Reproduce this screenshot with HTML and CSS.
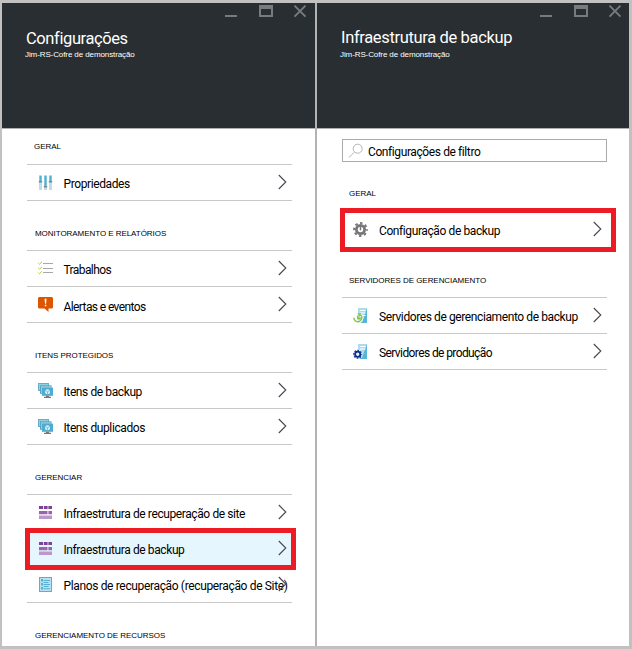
FILE: index.html
```html
<!DOCTYPE html>
<html lang="pt-BR">
<head>
<meta charset="utf-8">
<title>Configurações</title>
<link rel="stylesheet" href="styles.css">
</head>
<body>
<svg width="0" height="0" class="defs">
  <defs>
    <symbol id="chevron" viewBox="0 0 9 16"><path d="M.8 1l7 7-7 7" fill="none" stroke="#45474f" stroke-width="1.1"/></symbol>
    <symbol id="controls" viewBox="0 0 82 13">
      <path d="M0 11h12" stroke="#777b7e" stroke-width="2"/>
      <path fill="#777b7e" fill-rule="evenodd" d="M34 0h14v12H34zM36 4v6h10V4z"/>
      <path d="M69.5.7l11 11M80.5.7l-11 11" stroke="#777b7e" stroke-width="1.9"/>
    </symbol>
    <symbol id="sliders" viewBox="0 0 15 15">
      <path fill="#b9dfec" d="M1 0h3v15H1zM6 0h3v15H6zM11 0h3v15h-3z"/>
      <path fill="#4fb0d0" d="M1.5 1h2v5h-2zM6.500 1h2v10h-2zM11.500 1h2v5h-2z"/>
      <path fill="#858585" d="M.8 6h3.400v1.500H.8zM5.800 11h3.400v1.500H5.800zM10.800 6h3.400v1.500h-3.400z"/>
    </symbol>
    <symbol id="tasks" viewBox="0 0 15 15">
      <path stroke="#a4a8aa" stroke-width="1" d="M5 2.500h10M5 7.500h10M5 11.500h10"/>
      <path fill="none" stroke="#a6cf3a" stroke-width="1" d="M.3 2l1.200 1.200L4 .8M.3 7l1.200 1.200L4 5.800M.3 11.500l1.200 1.200L4 10.300"/>
    </symbol>
    <symbol id="alert" viewBox="0 0 15 15">
      <path fill="#dc5500" d="M1 0h13l1 1v9.500l-1 1h-3.500V15l-4-3.500H1l-1-1V1z"/>
      <path fill="#fff" d="M6.600 1.800h1.900l-.4 5h-1.100zM6.800 7.800h1.500v1.500H6.800z"/>
    </symbol>
    <symbol id="monitors" viewBox="0 0 15 15">
      <path fill="#6bacc9" d="M0 0h11v8H0z"/>
      <path fill="#92cfe3" d="M1 1h9v6H1z"/>
      <path fill="#5ba4c4" d="M2 2.300h11.500v8.500H2z"/>
      <path fill="#8bcce3" d="M3 3.200h10v7H3z"/>
      <path fill="#4fabcf" d="M4 4.600h11v8.200H4z"/>
      <path fill="#777" d="M8 12.800h3v1h2v1.200H6v-1.200h2z"/>
      <circle cx="9.500" cy="8.700" r="2.500" fill="#d9f1fa"/>
      <path fill="none" stroke="#4fabcf" stroke-width=".7" d="M7.400 7.600l2.100 1.200 2.100-1.200M9.500 8.800v2.300"/>
    </symbol>
    <symbol id="blocks" viewBox="0 0 15 15">
      <path fill="#7d4199" d="M1 1h4v3H1zM5.800 1h3.800v3H5.800zM10.400 1H14v3h-3.600z"/>
      <path fill="#9864ad" d="M1 6h8.500v3.200H1zM10.400 6H14v3.200h-3.600z"/>
      <path fill="#bd96cc" d="M1 10.500h13v3.500H1z"/>
    </symbol>
    <symbol id="plan" viewBox="0 0 15 15">
      <path fill="#58b0d4" d="M1 0h13v15H1z"/>
      <path fill="#b8e1f1" d="M2 1h11v13H2z"/>
      <path fill="#58b0d4" d="M3 2h2v2.500H3zM3 6h2v2.500H3zM3 10h2v2.500H3zM5.500 3H12v1H5.500zM5.500 5h5v1h-5zM5.500 7H12v1H5.500zM5.500 9h5v1h-5zM5.500 11.300H12v1H5.500z"/>
    </symbol>
    <symbol id="gear" viewBox="0 0 15 15">
      <circle cx="7.500" cy="7.500" r="6.400" fill="none" stroke="#777" stroke-width="2" stroke-dasharray="2.500 2.527" stroke-dashoffset="1.250"/>
      <circle cx="7.500" cy="7.500" r="4.100" fill="none" stroke="#777" stroke-width="2.800"/>
      <path stroke="#777" stroke-width="1.500" d="M7.500 3.500v4.800"/>
    </symbol>
    <symbol id="server-backup" viewBox="0 0 15 15">
      <path fill="#58b4d8" d="M5 0h9v15H5z"/>
      <path fill="#aadcee" d="M5 0h9L9 14H5z"/>
      <path fill="#fff" d="M7 2h5.500v1H7zM7 4.500h5.500v1H7zM7 7h5.500v1H7z"/>
      <path fill="none" stroke="#fff" stroke-width="2.600" d="M1.200 8.800a4 4 0 1 0 6-2.200"/>
      <path fill="none" stroke="#8cc63f" stroke-width="1.500" d="M.8 9.800a4 4 0 1 0 6.500-3.200M4.700 7.500v3h3"/>
      <path fill="#8cc63f" d="M4.300 5.500l4-.5-1.500 3.600z"/>
    </symbol>
    <symbol id="server-gear" viewBox="0 0 15 15">
      <path fill="#58b4d8" d="M5 0h9v15H5z"/>
      <path fill="#aadcee" d="M5 0h9L9 14H5z"/>
      <path fill="#fff" d="M7 2h5.500v1H7zM7 4.500h5.500v1H7z"/>
      <circle cx="4.700" cy="10.300" r="4.800" fill="#e5f4fa"/>
      <circle cx="4.700" cy="10.300" r="3.900" fill="none" stroke="#102a8e" stroke-width="1.300" stroke-dasharray="1.531 1.531" stroke-dashoffset=".765"/>
      <circle cx="4.700" cy="10.300" r="2.600" fill="none" stroke="#102a8e" stroke-width="1.800"/>
    </symbol>
  </defs>
</svg>

<main class="portal">
  <section class="blade blade-settings">
    <header class="blade-header">
      <svg class="controls"><use href="#controls"/></svg>
      <h1>Configurações</h1>
      <p>Jim-RS-Cofre de demonstração</p>
    </header>
    <div class="blade-body">
      <h2 class="first">GERAL</h2>
      <ul>
        <li><svg class="icon"><use href="#sliders"/></svg><span>Propriedades</span><svg class="chevron"><use href="#chevron"/></svg></li>
      </ul>
      <h2>MONITORAMENTO E RELATÓRIOS</h2>
      <ul>
        <li><svg class="icon"><use href="#tasks"/></svg><span class="tight">Trabalhos</span><svg class="chevron"><use href="#chevron"/></svg></li>
        <li><svg class="icon"><use href="#alert"/></svg><span class="tight low">Alertas e eventos</span><svg class="chevron"><use href="#chevron"/></svg></li>
      </ul>
      <h2>ITENS PROTEGIDOS</h2>
      <ul>
        <li><svg class="icon"><use href="#monitors"/></svg><span>Itens de backup</span><svg class="chevron"><use href="#chevron"/></svg></li>
        <li><svg class="icon"><use href="#monitors"/></svg><span>Itens duplicados</span><svg class="chevron"><use href="#chevron"/></svg></li>
      </ul>
      <h2>GERENCIAR</h2>
      <ul>
        <li><svg class="icon"><use href="#blocks"/></svg><span>Infraestrutura de recuperação de site</span><svg class="chevron"><use href="#chevron"/></svg></li>
        <li class="selected marked"><svg class="icon"><use href="#blocks"/></svg><span>Infraestrutura de backup</span><svg class="chevron"><use href="#chevron"/></svg></li>
        <li><svg class="icon"><use href="#plan"/></svg><span class="wide">Planos de recuperação (recuperação de Site)</span><svg class="chevron"><use href="#chevron"/></svg></li>
      </ul>
      <h2>GERENCIAMENTO DE RECURSOS</h2>
    </div>
  </section>

  <section class="blade blade-backup">
    <header class="blade-header">
      <svg class="controls"><use href="#controls"/></svg>
      <h1>Infraestrutura de backup</h1>
      <p>Jim-RS-Cofre de demonstração</p>
    </header>
    <div class="blade-body">
      <div class="filter">
        <svg viewBox="0 0 16 16"><path fill="none" stroke="#b5b5b5" stroke-width="1" d="M1 14.500l5.300-5.300"/><circle cx="9.700" cy="5.700" r="4.500" fill="none" stroke="#b5b5b5"/></svg>
        <span>Configurações de filtro</span>
      </div>
      <h2 class="after-filter">GERAL</h2>
      <ul>
        <li class="marked"><svg class="icon"><use href="#gear"/></svg><span>Configuração de backup</span><svg class="chevron"><use href="#chevron"/></svg></li>
      </ul>
      <h2>SERVIDORES DE GERENCIAMENTO</h2>
      <ul>
        <li><svg class="icon"><use href="#server-backup"/></svg><span>Servidores de gerenciamento de backup</span><svg class="chevron"><use href="#chevron"/></svg></li>
        <li><svg class="icon"><use href="#server-gear"/></svg><span class="tight">Servidores de produção</span><svg class="chevron"><use href="#chevron"/></svg></li>
      </ul>
    </div>
  </section>
</main>
</body>
</html>
```
FILE: styles.css
```css
* { box-sizing: border-box; }

body {
  margin: 0;
  background: #c1c1c1;
  color: #000;
  font-family: Roboto, "Liberation Sans", sans-serif;
}

.defs { position: absolute; }

.portal {
  display: grid;
  grid-template-columns: 313px 314px;
  height: 649px;
  padding: 3px 3px 3px 2px;
}

.blade { background: #fff; overflow: hidden; }
.blade-backup { border-left: 2px solid #b3b3b3; }

.blade-header {
  display: flex;
  flex-direction: column;
  height: 126px;
  padding: 1px 8px 0 24px;
  background: #292e32;
  color: #fff;
  border-bottom: 1px solid #b0b0b0;
}

.blade-backup .blade-header {
  margin-left: -2px;
  border-left: 2px solid #43484b;
  padding-right: 7px;
}

.controls {
  align-self: flex-end;
  width: 82px;
  height: 13px;
  margin-top: 1px;
}

h1 {
  margin: 11px 0 0;
  font-size: 16.5px;
  font-weight: 400;
  line-height: 20px;
  letter-spacing: -0.4px;
}

.blade-header p {
  margin: 0 0 0 -1px;
  font: 8px/12px "Liberation Sans", sans-serif;
  letter-spacing: -0.1px;
}

.blade-backup h1 { margin-top: 10px; letter-spacing: -0.35px; }
.blade-backup .blade-header p { margin-top: 1px; }

.blade-body { padding: 0 23px 0 25px; }
.blade-backup .blade-body { padding: 10px 22px 0 25px; }

h2 {
  height: 49px;
  margin: 0;
  padding: 27px 0 0 8px;
  font: 8px/12px "Liberation Sans", sans-serif;
  letter-spacing: -0.05px;
}

h2.first { height: 35px; padding: 12px 0 0 7px; }
.blade-backup h2 { padding-left: 7px; }
h2.after-filter { padding-top: 26px; }

ul {
  margin: 0;
  padding: 0;
  list-style: none;
  border-top: 1px solid #c8c8c8;
}

li {
  position: relative;
  display: flex;
  align-items: center;
  height: 36px;
  padding: 0 5px 0 11px;
  border-bottom: 1px solid #c8c8c8;
}

.selected { background: #e5f6fe; }

.marked::after {
  content: "";
  position: absolute;
  inset: -3px -4px -4px -2px;
  border: 5px solid #ed1c24;
}

.blade-backup .marked::after { inset: -4px -9px -5px -2px; }

.icon { flex: none; width: 15px; height: 15px; }

li span {
  flex: 1;
  min-width: 0;
  margin-left: 10.500px;
  padding-top: 3px;
  font-size: 12px;
  line-height: 14px;
  letter-spacing: -0.4px;
  white-space: nowrap;
}

.blade-backup li span { margin-left: 11px; }

li span.tight { letter-spacing: -0.6px; }
li span.wide { letter-spacing: -0.35px; }
li span.low { padding-top: 5px; }

.chevron { flex: none; width: 9px; height: 16px; margin-bottom: 2px; }

.filter {
  display: flex;
  align-items: center;
  height: 23px;
  padding-left: 5px;
  border: 1px solid #ababab;
  font-size: 12px;
  letter-spacing: -0.4px;
}

.filter svg { width: 16px; height: 16px; margin-right: 4px; }
.filter span { padding-top: 3px; }
```
